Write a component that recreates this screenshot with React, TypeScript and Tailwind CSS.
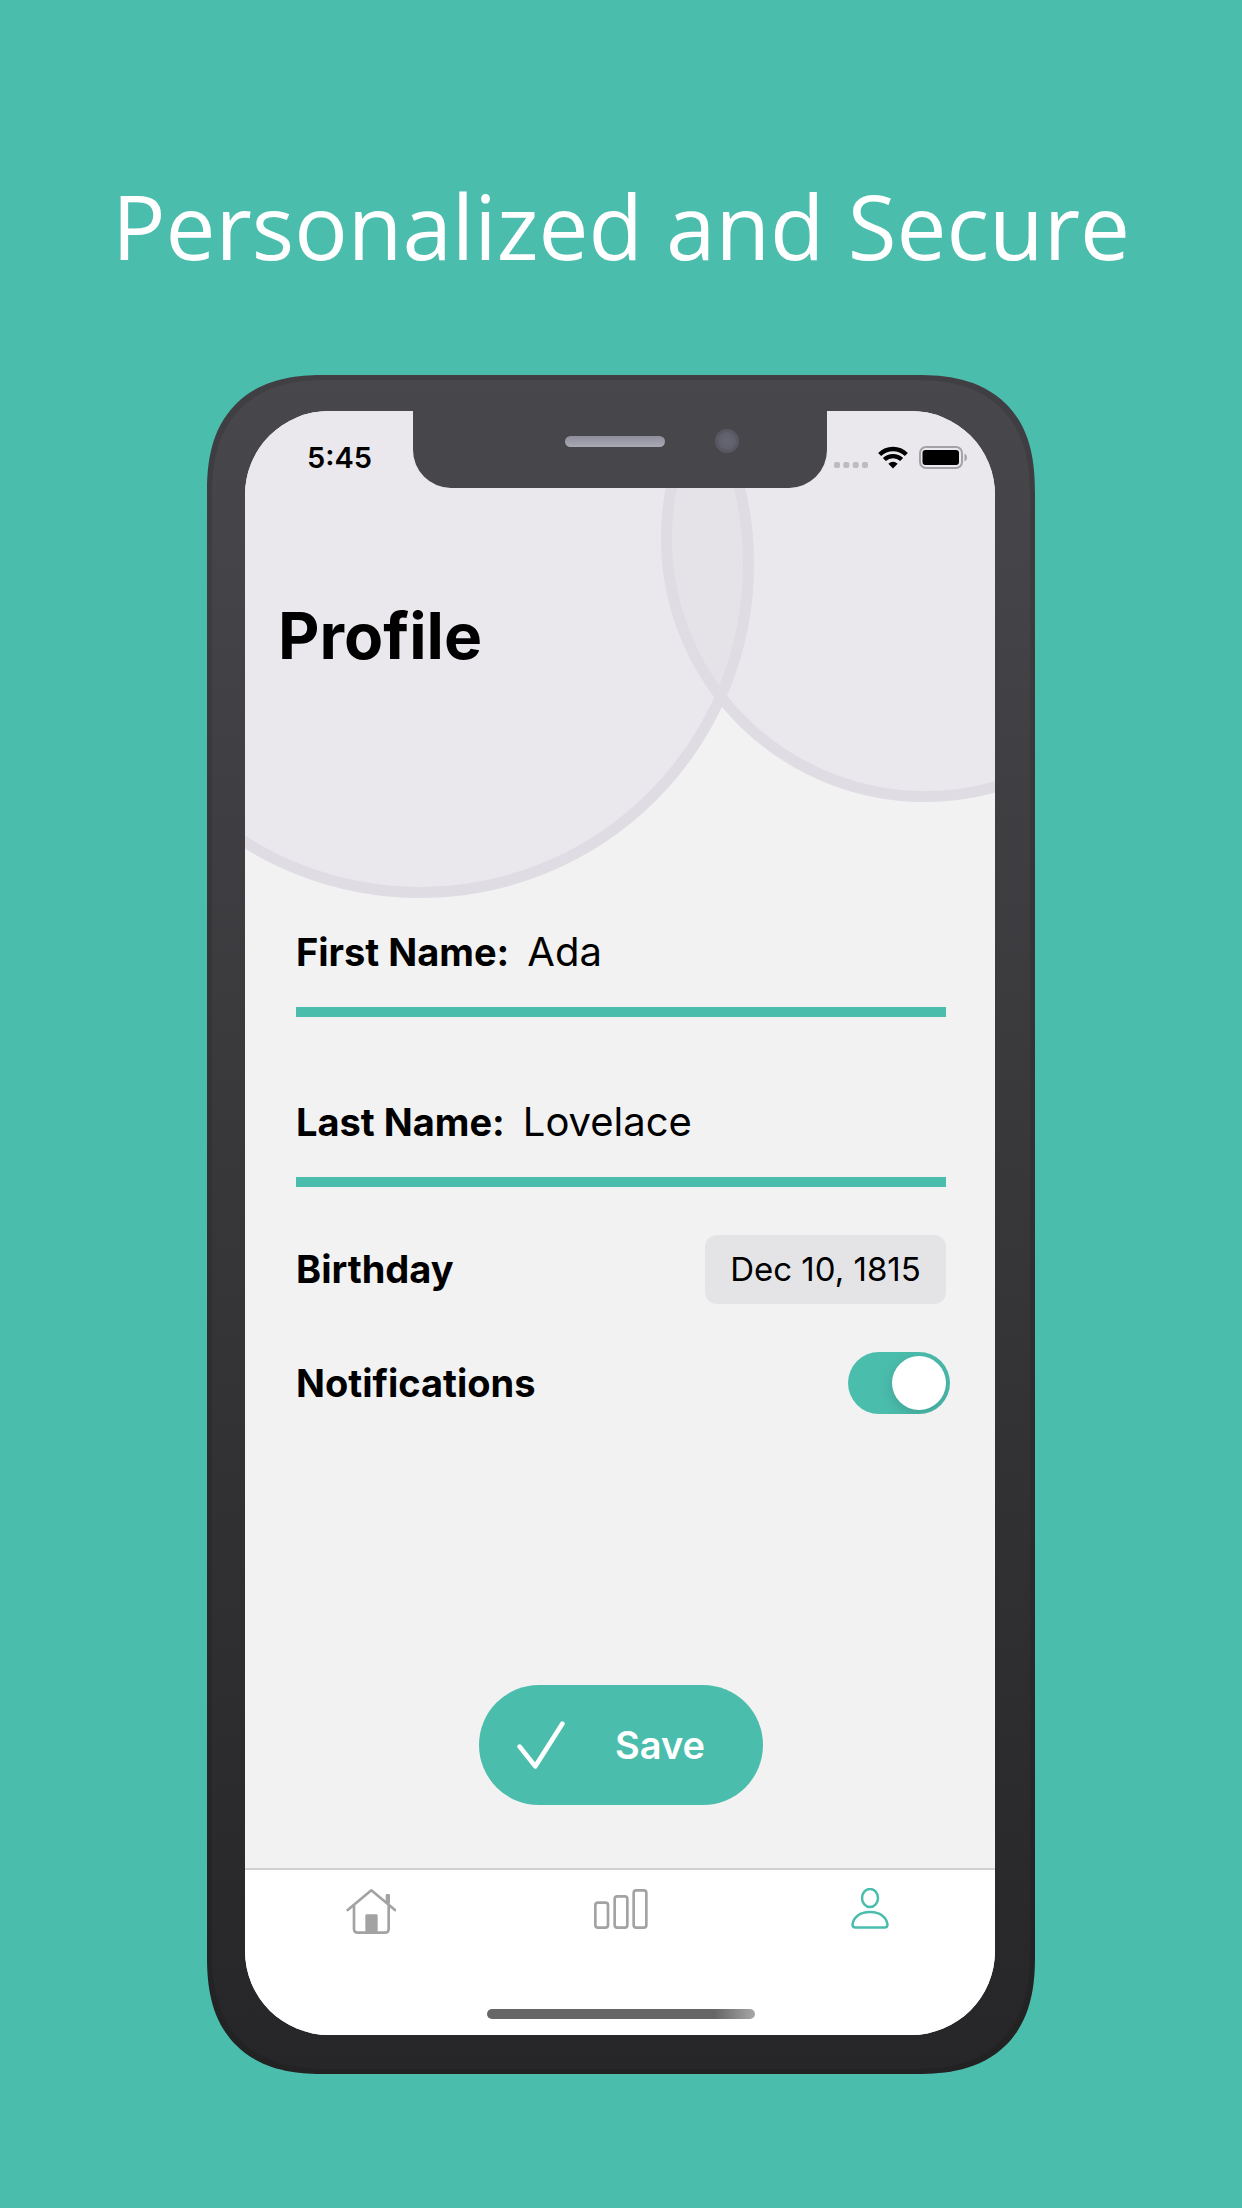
import { useState } from "react";
import type { ReactNode } from "react";

function StatusBar() {
  return (
    <div className="relative grid h-[77px] grid-cols-[168fr_414fr_168fr]">
      <div className="flex items-center pt-4 pl-[62px] text-[29px] leading-8 font-semibold">5:45</div>
      <div className="relative flex items-start justify-center rounded-b-[38px] bg-[#47464a] pr-[10px]">
        <div className="mt-[25px] h-[11px] w-[100px] rounded-full bg-linear-to-b from-[#8f8f9b] to-[#aaaab6]" />
        <div className="absolute top-[18px] right-[88px] size-6 rounded-full border-3 border-[#585762] bg-radial from-[#666673] to-[#5c5b68]" />
      </div>
      <div className="flex items-center justify-end pt-4 pr-7">
        <svg className="mt-[15px] mr-[10px] h-[6px] w-[34px]" viewBox="0 0 34 6" fill="#bcbbbf" aria-hidden="true">
          <rect width="6" height="6" rx="2" />
          <rect x="9.3" width="6" height="6" rx="2" />
          <rect x="18.7" width="6" height="6" rx="2" />
          <rect x="28" width="6" height="6" rx="2" />
        </svg>
        <svg className="mr-[11px] h-[23px] w-[30px]" viewBox="0 0 90 68" fill="none" stroke="#000" strokeWidth="13" aria-label="Wi-Fi">
          <path d="M5 25A57 57 0 0 1 85 25" />
          <path d="M19 40A38 38 0 0 1 71 40" />
          <path d="M45 67L31 53Q45 40 59 53Z" fill="#000" stroke="none" />
        </svg>
        <svg className="h-[23px] w-[48px]" viewBox="0 0 48 23" aria-label="Battery full">
          <rect x="1" y="1" width="42" height="21" rx="6" fill="none" stroke="#a3a2a6" strokeWidth="2" />
          <rect x="3.5" y="4" width="36.5" height="15" rx="3" fill="#000" />
          <path d="M45.5 7.5Q48 8.500 48 11.500T45.5 15.500Z" fill="#a3a2a6" />
        </svg>
      </div>
    </div>
  );
}

function BackgroundCircles() {
  return (
    <svg className="absolute top-0 left-0 h-[500px] w-full" viewBox="0 0 750 500" preserveAspectRatio="xMidYMin slice" aria-hidden="true">
      <defs>
        <clipPath id="leftDisc">
          <circle cx="175" cy="153" r="334" />
        </clipPath>
      </defs>
      <circle cx="175" cy="153" r="334" fill="#eae8ed" />
      <circle cx="680" cy="127" r="264" fill="#eae8ed" />
      <circle cx="680" cy="127" r="264" fill="#e5e3e8" clipPath="url(#leftDisc)" />
      <circle cx="175" cy="153" r="328.500" fill="none" stroke="#dfdce3" strokeWidth="11" />
      <circle cx="680" cy="127" r="258.500" fill="none" stroke="#dfdce3" strokeWidth="11" />
    </svg>
  );
}

function NameField({ id, label, value }: { id: string; label: string; value: string }) {
  return (
    <div className="flex items-center border-b-10 border-[#4bbdad] pb-[25px]">
      <label htmlFor={id} className="shrink-0 text-[38px] leading-[60px] font-bold">
        {label}
      </label>
      <input
        id={id}
        defaultValue={value}
        className="ml-[18px] h-[60px] min-w-0 flex-1 bg-transparent text-[40px] leading-[60px] outline-none"
      />
    </div>
  );
}

function Tab({ label, active, onSelect, children }: { label: string; active: boolean; onSelect: () => void; children: ReactNode }) {
  return (
    <button
      type="button"
      aria-label={label}
      aria-current={active ? "page" : undefined}
      onClick={onSelect}
      className={`flex flex-1 justify-center ${active ? "text-[#4bbdad]" : "text-[#a3a3a3]"}`}
    >
      {children}
    </button>
  );
}

function TabBar() {
  const [tab, setTab] = useState("profile");
  return (
    <nav className="relative flex h-[167px] flex-col items-center justify-between border-t-2 border-[#d0d0d0] bg-white pt-[18px] pb-4 pl-px">
      <div className="flex w-full">
        <Tab label="Home" active={tab === "home"} onSelect={() => setTab("home")}>
          <svg className="h-[46px] w-[50px]" viewBox="0 0 150 138" fill="none" stroke="currentColor" strokeWidth="8" strokeLinecap="round" strokeLinejoin="round">
            <path d="M5 66L76 7L147 66" />
            <path d="M24 53V122Q24 134 36 134H116Q128 134 128 122V53" />
            <path d="M123 22V40L128 44V22Z" />
            <path d="M62 83H91V134H62Z" fill="currentColor" />
          </svg>
        </Tab>
        <Tab label="Statistics" active={tab === "stats"} onSelect={() => setTab("stats")}>
          <svg className="h-[46px] w-[54px]" viewBox="0 0 162 138" fill="none" stroke="currentColor" strokeWidth="8">
            <rect x="4" y="44" width="38" height="75" rx="8" />
            <rect x="62" y="25" width="38" height="94" rx="8" />
            <rect x="119" y="7" width="38" height="112" rx="8" />
          </svg>
        </Tab>
        <Tab label="Profile" active={tab === "profile"} onSelect={() => setTab("profile")}>
          <svg className="h-[46px] w-[38px]" viewBox="0 0 38 46" fill="none" stroke="currentColor" strokeWidth="2.500" strokeLinejoin="round">
            <ellipse cx="19" cy="10" rx="8" ry="9" />
            <path d="M1.500 36.500C2.500 29 9 24 19 24S35.500 29 36.500 36.500Q36.500 39.500 33.500 39.500H4.500Q1.500 39.500 1.500 36.500Z" />
          </svg>
        </Tab>
      </div>
      <div className="h-[10px] w-[268px] rounded-full bg-linear-to-r from-[#666666] from-85% to-[#a8a8a8]" />
    </nav>
  );
}

export default function App() {
  const [notify, setNotify] = useState(true);
  return (
    <main className="flex min-h-screen flex-col items-center bg-[#4bbdad] pb-[134px] font-['Inter',sans-serif] text-black">
      <h1 className="pt-[160px] text-center font-['Open_Sans',sans-serif] text-[89px] leading-[132px] whitespace-nowrap text-white">
        Personalized and Secure
      </h1>
      <section className="mt-[83px] flex w-2/3 flex-1 flex-col rounded-[118px] bg-linear-to-b from-[#48474b] to-[#262628] pt-[36px] pr-[40px] pb-[39px] pl-[38px] shadow-[inset_0_0_0_5px_rgba(0,0,0,0.1)] [corner-shape:superellipse(1.3)]">
        <div className="relative flex flex-1 flex-col overflow-hidden rounded-[84px] bg-[#f2f2f2]">
          <BackgroundCircles />
          <StatusBar />
          <h2 className="relative mt-[108px] pl-[33px] text-[64px] leading-[80px] font-bold">Profile</h2>
          <form className="relative flex flex-1 flex-col pt-[246px] pr-[49px] pl-[51px]" onSubmit={(e) => e.preventDefault()}>
            <div className="flex flex-col gap-[75px]">
              <NameField id="first" label="First Name:" value="Ada" />
              <NameField id="last" label="Last Name:" value="Lovelace" />
            </div>
            <div className="mt-12 flex items-center justify-between">
              <span id="birthday" className="text-[38px] font-bold">Birthday</span>
              <button
                type="button"
                aria-describedby="birthday"
                className="h-[69px] w-[241px] rounded-xl bg-[#e4e4e6] text-[33px] whitespace-nowrap"
              >
                Dec 10, 1815
              </button>
            </div>
            <div className="mt-[48px] flex h-[62px] items-center justify-between">
              <label htmlFor="notifications" className="text-[38px] font-bold">Notifications</label>
              <input
                id="notifications"
                type="checkbox"
                role="switch"
                checked={notify}
                onChange={(e) => setNotify(e.target.checked)}
                className="-mr-1 flex h-[62px] w-[102px] appearance-none overflow-hidden rounded-full bg-gray-300 p-1 before:size-[54px] before:rounded-full before:bg-white before:shadow-[0_4px_14px_rgba(0,0,0,0.15)] checked:justify-end checked:bg-[#4bbdad]"
              />
            </div>
            <button
              type="submit"
              className="mt-auto mb-[63px] flex h-[120px] w-[284px] items-center self-center rounded-full bg-[#4bbdad] pl-[38px] text-[38px] font-semibold text-white"
            >
              <svg className="mr-[50px] size-[48px]" viewBox="0 0 144 144" fill="none" stroke="currentColor" strokeWidth="14" strokeLinecap="round" strokeLinejoin="round" aria-hidden="true">
                <path d="M8 77L55 136L136 8" />
              </svg>
              Save
            </button>
          </form>
          <TabBar />
        </div>
      </section>
    </main>
  );
}
